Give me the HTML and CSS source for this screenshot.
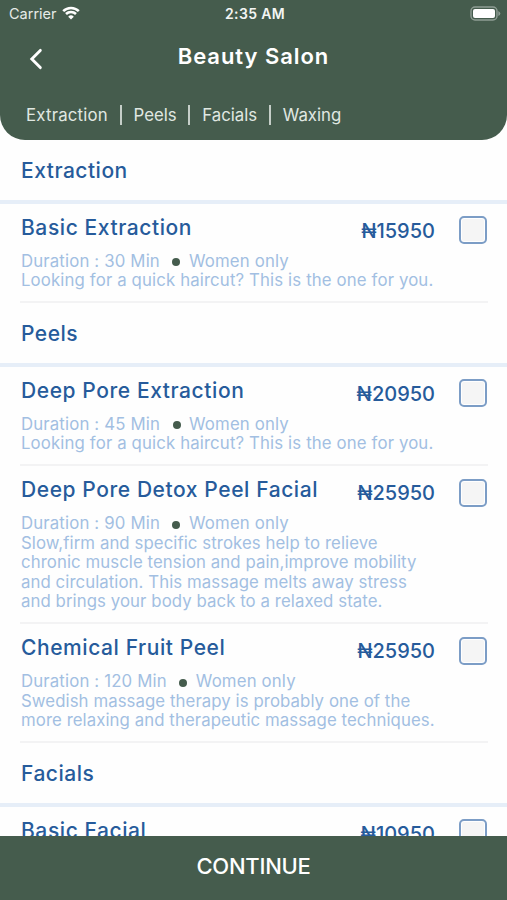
FILE: index.html
```html
<!DOCTYPE html>
<html lang="en">
  <head>
    <meta charset="utf-8">
    <title>Beauty Salon</title>
    <link rel="stylesheet" href="styles.css">
  </head>
  <body>
    <header class="header">
      <div class="status">
        <div class="carrier">
          <span>Carrier</span>
          <svg class="wifi" viewBox="0 0 18 14" width="18" height="14">
            <path d="M1.2 5.1 A11.2 11.2 0 0 1 16.8 5.1" />
            <path d="M4 8 A7.2 7.2 0 0 1 14 8" />
            <path class="wifi-dot" d="M9 13.6 L6.2 10.7 A4 4 0 0 1 11.8 10.7 Z" />
          </svg>
        </div>
        <div class="time">2:35 AM</div>
        <svg class="battery" viewBox="0 0 31 15" width="31" height="15">
          <rect class="battery-case" x="1" y="1" width="26" height="13" rx="4" />
          <rect class="battery-level" x="3" y="3" width="22" height="9" rx="2" />
          <path class="battery-tip" d="M28.3 5 Q30.3 6 30.3 7.5 Q30.3 9 28.3 10 Z" />
        </svg>
      </div>
      <div class="topbar">
        <svg class="back" viewBox="0 0 14 22" width="14" height="22">
          <path d="M11.3 2.4 L2.8 11 L11.3 19.6" />
        </svg>
        <h1>Beauty Salon</h1>
      </div>
      <nav class="tabs">
        <a class="wide">Extraction</a>
        <a>Peels</a>
        <a>Facials</a>
        <a>Waxing</a>
      </nav>
    </header>

    <main class="services">
      <h2>Extraction</h2>
      <div class="item">
        <div class="info">
          <h3>Basic Extraction</h3>
          <p class="meta"><span>Duration : 30 Min</span><i class="dot"></i><span>Women only</span></p>
          <p class="desc">Looking for a quick haircut? This is the one for you.</p>
        </div>
        <div class="price">₦15950</div>
        <div class="check"></div>
      </div>

      <h2>Peels</h2>
      <div class="item">
        <div class="info">
          <h3>Deep Pore Extraction</h3>
          <p class="meta"><span>Duration : 45 Min</span><i class="dot"></i><span>Women only</span></p>
          <p class="desc">Looking for a quick haircut? This is the one for you.</p>
        </div>
        <div class="price">₦20950</div>
        <div class="check"></div>
      </div>
      <div class="item">
        <div class="info">
          <h3>Deep Pore Detox Peel Facial</h3>
          <p class="meta"><span>Duration : 90 Min</span><i class="dot"></i><span>Women only</span></p>
          <p class="desc long">Slow,firm and specific strokes help to relieve<br>chronic muscle tension and pain,improve mobility<br>and circulation. This massage melts away stress<br>and brings your body back to a relaxed state.</p>
        </div>
        <div class="price">₦25950</div>
        <div class="check"></div>
      </div>
      <div class="item">
        <div class="info">
          <h3>Chemical Fruit Peel</h3>
          <p class="meta"><span>Duration : 120 Min</span><i class="dot"></i><span>Women only</span></p>
          <p class="desc long">Swedish massage therapy is probably one of the<br>more relaxing and therapeutic massage techniques.</p>
        </div>
        <div class="price">₦25950</div>
        <div class="check"></div>
      </div>

      <h2>Facials</h2>
      <div class="item">
        <div class="info">
          <h3>Basic Facial</h3>
        </div>
        <div class="price">₦10950</div>
        <div class="check"></div>
      </div>
    </main>

    <button class="continue">CONTINUE</button>
  </body>
</html>
```

FILE: styles.css
```css
* { box-sizing: border-box; }

body {
  margin: 0; height: 900px; overflow: hidden; background: #fefefe;
  display: flex; flex-direction: column;
  font-family: Inter, "Liberation Sans", sans-serif;
}

h1, h2, h3, p { margin: 0; }

/* header */
.header {
  height: 140px; flex: none; background: #455c4d; color: #fff;
  border-radius: 0 0 25px 25px;
}

.status {
  height: 28px; padding: 0 6px 0 9px;
  display: grid; grid-template-columns: 1fr auto 1fr; align-items: center;
  font-size: 14.5px; line-height: 28px;
}
.carrier { display: flex; align-items: center; gap: 5px; color: #e6ebe7; }
.wifi { fill: none; stroke: #fff; stroke-width: 2.6; margin-top: -2px; }
.wifi-dot { fill: #fff; stroke: none; }
.time { font-weight: 600; font-size: 14px; letter-spacing: 0.35px; color: #f3f5f3; }
.battery { justify-self: end; margin-top: -2px; }
.battery-case { fill: none; stroke: #8f9d94; stroke-width: 1.4; }
.battery-level { fill: #fff; }
.battery-tip { fill: #8f9d94; }

.topbar {
  height: 57px; padding: 0 29px;
  display: grid; grid-template-columns: 1fr auto 1fr; align-items: center;
}
.back { fill: none; stroke: #fff; stroke-width: 2.9; stroke-linecap: round; margin-top: 5px; }
.topbar h1 { font-size: 22px; font-weight: 600; letter-spacing: 0.95px; line-height: 57px; }

.tabs { display: flex; align-items: center; padding: 20px 0 0 26px; }
.tabs a { font-size: 16.8px; font-weight: 400; line-height: 20px; color: #e0e8e2; }
.tabs .wide { letter-spacing: 0.2px; }
.tabs a + a { border-left: 2px solid #c5cec8; margin-left: 11.8px; padding-left: 11.8px; }

/* list */
.services { flex: 1; min-height: 0; overflow: hidden; color: #265b9b; }

.services h2 {
  height: 63.5px; padding-left: 21px; border-bottom: 4px solid #e6eef8;
  font-size: 21px; font-weight: 500; line-height: 61px; letter-spacing: 0.5px;
}

.item {
  margin: 0 19px 0 20px; padding-left: 1px; border-bottom: 2px solid #f3f3f4;
  display: grid; grid-template-columns: 1fr auto 28px 1px; align-items: start;
}
.item .info { grid-column: 1 / 5; grid-row: 1; padding-bottom: 10.5px; }
.item h3 { font-size: 21px; font-weight: 500; line-height: 48px; letter-spacing: 0.58px; }
.meta, .desc { font-size: 16.8px; font-weight: 400; line-height: 19.5px; letter-spacing: 0.29px; color: #a2bfe2; }
.meta { letter-spacing: 0.15px; }
.desc { letter-spacing: 0.13px; }
.desc.long { letter-spacing: 0.07px; }
.meta { display: flex; align-items: center; }
.dot { width: 8px; height: 8px; border-radius: 50%; background: #455c4d; margin: 2px 8.5px 0 12.5px; }
.price {
  grid-column: 2; grid-row: 1; padding-right: 24px;
  font-size: 20px; font-weight: 500; line-height: 55px;
}
.check {
  grid-column: 3; grid-row: 1; width: 28px; height: 28px; margin-top: 12.5px;
  border: 2px solid #7c9dc6; border-radius: 5px; background: #f5f5f5;
  box-shadow: inset 0 0 0 1px #fff;
}

.continue {
  height: 64.5px; flex: none; border: none; padding: 0 0 4px; background: #455c4d; color: #fff;
  font-family: inherit; font-size: 22px; font-weight: 500; letter-spacing: -0.25px;
}
```
